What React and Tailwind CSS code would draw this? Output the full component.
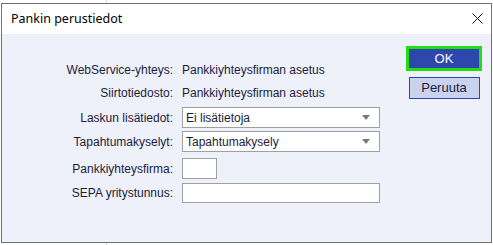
const labelCls = "w-[180px] pr-[9px] text-right shrink-0";

const Arrow = () => (
  <svg width="8" height="5" viewBox="0 0 8 5" className="shrink-0">
    <path d="M0 0 H8 L4 5 Z" fill="#7a7a7a" />
  </svg>
);

const SelectBox = ({ value }) => (
  <div className="w-[198px] h-[21px] bg-white border border-[#a0a0a0] flex items-center justify-between pl-[3px] pr-[9px]">
    <span>{value}</span>
    <Arrow />
  </div>
);

const Row = ({ label, h, className = "", children }) => (
  <div className={`flex items-center ${h} ${className}`}>
    <div className={labelCls}>{label}</div>
    {children}
  </div>
);

export default function App() {
  return (
    <div className="w-[493px] h-[245px] bg-white flex flex-col overflow-hidden">
      <div className="h-[3px] pl-[106px] flex shrink-0">
        <div className="w-px bg-[#d8d8d8]" />
      </div>
      <div className="ml-[1px] w-[491px] h-[240px] border border-[#707070] flex flex-col shrink-0">
        <div className="h-[30px] bg-white flex items-center justify-between pl-[9px] pr-[8px] shrink-0">
          <span className="text-[12.5px] text-black" style={{ fontFamily: '"Noto Sans", "Open Sans", sans-serif' }}>
            Pankin perustiedot
          </span>
          <svg width="11" height="11" viewBox="0 0 11 11" className="mb-[1px]">
            <path d="M0.5 0.5 L10.5 10.5 M10.5 0.5 L0.5 10.5" stroke="#111" strokeWidth="1" />
          </svg>
        </div>
        <div
          className="flex-1 bg-[#eef1fa] flex justify-between pr-[9px] text-[12px] text-[#1c1c3a]"
          style={{ fontFamily: '"Liberation Sans", Arial, sans-serif' }}
        >
          <div className="flex flex-col pt-[25px]">
            <Row label="WebService-yhteys:" h="h-[22px]">
              <span>Pankkiyhteysfirman asetus</span>
            </Row>
            <Row label="Siirtotiedosto:" h="h-[23px]">
              <span>Pankkiyhteysfirman asetus</span>
            </Row>
            <Row label="Laskun lisätiedot:" h="h-[21px]" className="mt-[3px]">
              <SelectBox value="Ei lisätietoja" />
            </Row>
            <Row label="Tapahtumakyselyt:" h="h-[21px]" className="mt-[3px]">
              <SelectBox value="Tapahtumakysely" />
            </Row>
            <Row label="Pankkiyhteysfirma:" h="h-[21px]" className="mt-[6px]">
              <div className="w-[35px] h-[21px] bg-white border border-[#a0a0a0]" />
            </Row>
            <Row label="SEPA yritystunnus:" h="h-[20px]" className="mt-[4px]">
              <div className="w-[198px] h-[20px] bg-white border border-[#a0a0a0]" />
            </Row>
          </div>
          <div className="flex flex-col items-center pt-[12px]">
            <div className="w-[76px] h-[25px] border-[3px] border-[#22dd11] bg-[#2e47ad] text-white text-[13px] flex items-center justify-center">
              OK
            </div>
            <div className="mt-[6px] w-[71px] h-[22px] border border-[#2e47ad] bg-[#c9d3f0] text-[#1c1c3a] text-[13px] flex items-center justify-center">
              Peruuta
            </div>
          </div>
        </div>
      </div>
      <div className="h-[2px] pl-[106px] flex shrink-0">
        <div className="w-px bg-[#d8d8d8]" />
      </div>
    </div>
  );
}
